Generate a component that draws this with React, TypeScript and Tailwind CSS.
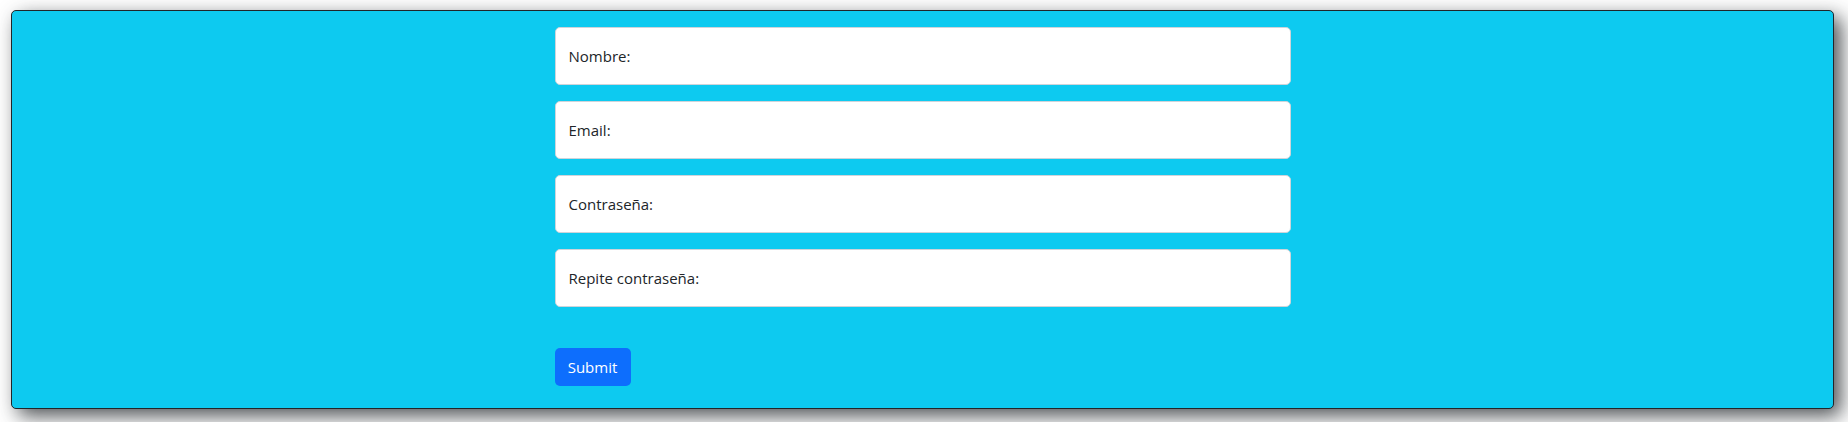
const fields = ["Nombre:", "Email:", "Contraseña:", "Repite contraseña:"];

export default function App() {
  return (
    <div className="min-h-[422px] bg-white pl-[11px] pr-[14px] pt-[10px] font-['Open_Sans',sans-serif]">
      <div className="h-[399px] rounded-[5px] border border-[#212529] bg-[#0dcaf0] pt-4 shadow-[7px_7px_20px_rgba(33,37,41,0.8)]">
        <form className="mx-auto w-[736px]" onSubmit={(e) => e.preventDefault()}>
          {fields.map((f) => (
            <div
              key={f}
              className="mb-4 flex h-[58px] items-center rounded-[5px] border border-[#ced4da] bg-white px-[13px] text-[15px] text-[#212529]"
            >
              {f}
            </div>
          ))}
          <button
            type="submit"
            className="mt-[25px] h-[38px] w-[76px] rounded-[5px] bg-[#0d6efd] text-[15px] text-white"
          >
            Submit
          </button>
        </form>
      </div>
    </div>
  );
}
